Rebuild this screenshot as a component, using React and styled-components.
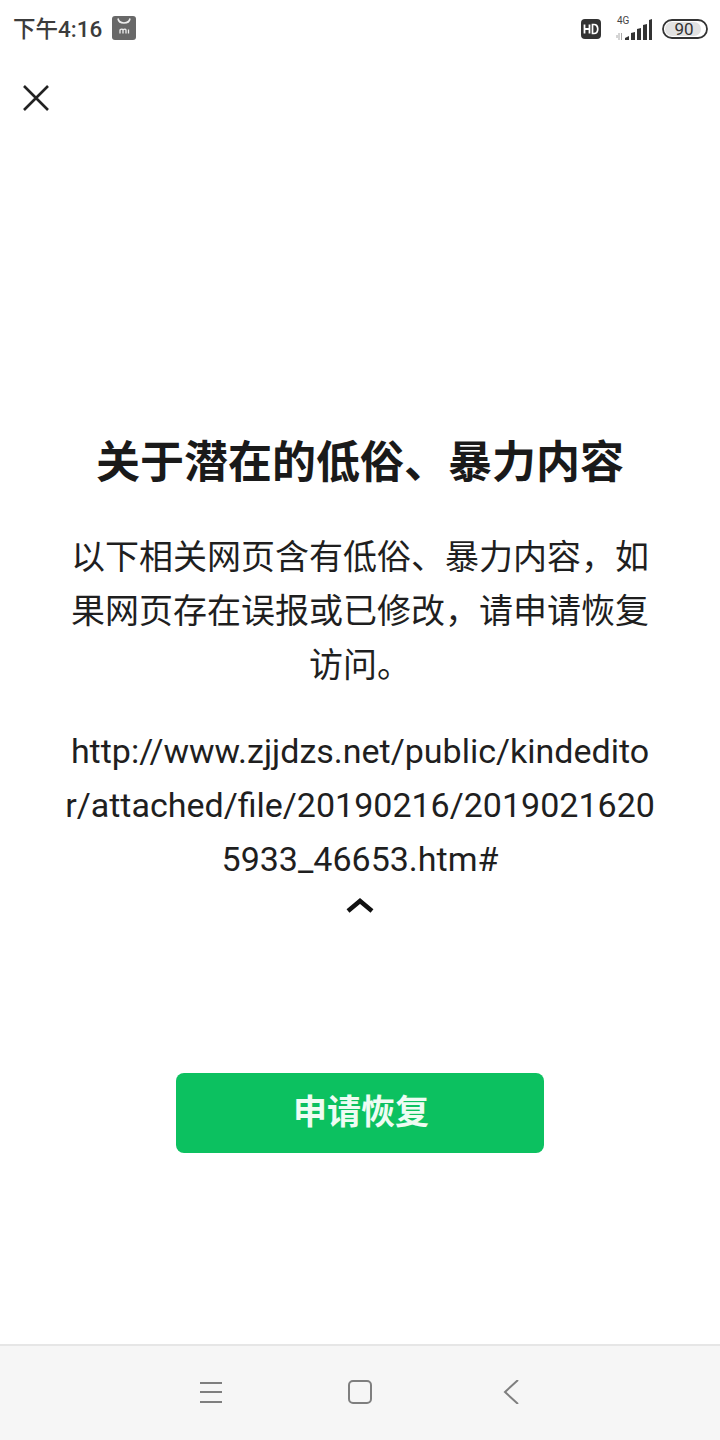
import React from "react";
import styled, { createGlobalStyle } from "styled-components";

const Global = createGlobalStyle`
  html, body { margin: 0; padding: 0; background: #fff; }
  body { font-family: Roboto, "Noto Sans CJK SC", sans-serif; }
`;

const Page = styled.div`
  width: 720px;
  height: 1440px;
  display: flex;
  flex-direction: column;
  overflow: hidden;
  background: #fff;
`;

const StatusBar = styled.div`
  height: 56px;
  flex: none;
  display: flex;
  align-items: center;
  justify-content: space-between;
  padding: 2px 12px 0 13px;
  box-sizing: border-box;
`;

const StatusGroup = styled.div`
  display: flex;
  align-items: center;
  gap: ${(p) => p.$gap || 0}px;
`;

const Clock = styled.span`
  font-size: 22.5px;
  line-height: 28px;
  font-weight: 500;
  color: #3c3c3c;
`;

const MiIcon = styled.svg`
  margin-top: -3px;
`;

const HdIcon = styled.svg`
  margin-right: 7px;
`;

const TopBar = styled.div`
  flex: none;
  height: 84px;
  padding: 29px 0 0 23px;
  box-sizing: border-box;
  display: flex;
  align-items: flex-start;
`;

const Main = styled.main`
  flex: 1;
  display: flex;
  flex-direction: column;
  align-items: center;
  padding-top: 297px;
  box-sizing: border-box;
`;

const Title = styled.h1`
  margin: 0;
  font-size: 44px;
  line-height: 52px;
  font-weight: 700;
  color: #1a1a1a;
  text-align: center;
  white-space: nowrap;
`;

const Paragraph = styled.p`
  margin: 41px 0 0;
  width: 590px;
  font-size: 34px;
  line-height: 54px;
  color: #1f1f1f;
  text-align: center;
`;

const Url = styled.p`
  margin: 32px 0 0;
  font-size: 34px;
  line-height: 54px;
  color: #1f1f1f;
  text-align: center;
  white-space: nowrap;
`;

const Chevron = styled.svg`
  display: block;
  margin-top: 12px;
`;

const Button = styled.button`
  margin-top: 159px;
  width: 368px;
  height: 80px;
  border: 0;
  border-radius: 8px;
  background: #0cc160;
  color: #eefcf3;
  font-family: inherit;
  font-size: 34px;
  font-weight: 700;
  padding: 0 0 7px 2px;
`;

const NavBar = styled.nav`
  flex: none;
  height: 96px;
  border-top: 2px solid #e6e6e6;
  background: #f6f6f6;
  box-sizing: border-box;
  display: grid;
  grid-template-columns: 24px 24px 24px;
  justify-content: center;
  column-gap: 125px;
  align-items: center;
  padding-bottom: 3px;
`;

const BackIcon = styled.svg`
  margin-left: 4px;
`;

const Line = { stroke: "#7f7f7f", fill: "none" };

export default function App() {
  return (
    <Page>
      <Global />
      <StatusBar>
        <StatusGroup $gap={9}>
          <Clock>下午4:16</Clock>
          <MiIcon width="26" height="26" viewBox="0 0 26 26">
            <rect x="1" y="1" width="24" height="24" rx="3" fill="#686868" />
            <path d="M7 3.500c1 6 11 6 12 0" fill="none" stroke="#eee" strokeWidth="1.6" />
            <path d="M9 18.500v-4M9 15c1-1.300 2.700-1.300 3 0v3.500M12 15c1-1.300 2.700-1.300 3 0v3.500M17.500 14.500v4" fill="none" stroke="#eee" strokeWidth="1.3" />
          </MiIcon>
        </StatusGroup>
        <StatusGroup $gap={7}>
          <HdIcon width="20" height="20" viewBox="0 0 20 20">
            <rect width="20" height="20" rx="4" fill="#333" />
            <path d="M3.500 5.500v9M3.500 10h5M8.500 5.500v9" stroke="#fff" strokeWidth="1.8" fill="none" />
            <path d="M11.500 5.500v9h1.500c5 0 5-9 0-9z" stroke="#fff" strokeWidth="1.7" fill="none" />
          </HdIcon>
          <svg width="40" height="26" viewBox="0 0 40 26">
            <text x="2" y="8" fontSize="10" fontFamily="Roboto, sans-serif" fill="#444">4G</text>
            <path d="M4 17v7M2 19v3M6.500 17v7" stroke="#aaa" strokeWidth="1" />
            <path d="M10 24v-2l4-2v4zM16 24v-7l4-1v8zM22 24v-11l4-1v12zM28 24v-15l4-1v16zM34 24v-20l3-1v21z" fill="#333" />
          </svg>
          <svg width="46" height="20" viewBox="0 0 46 20">
            <rect x="1" y="1" width="44" height="18" rx="9" fill="#fff" stroke="#333" strokeWidth="1.8" />
            <rect x="3" y="3" width="36" height="14" rx="7" fill="#e2e2e2" />
            <text x="22" y="16" textAnchor="middle" fontSize="17" fontFamily="Roboto, sans-serif" fill="#333">90</text>
          </svg>
        </StatusGroup>
      </StatusBar>
      <TopBar>
        <svg width="26" height="26" viewBox="0 0 26 26">
          <path d="M1 1l24 24M25 1L1 25" stroke="#222" strokeWidth="2.6" fill="none" />
        </svg>
      </TopBar>
      <Main>
        <Title>关于潜在的低俗、暴力内容</Title>
        <Paragraph>以下相关网页含有低俗、暴力内容，如果网页存在误报或已修改，请申请恢复访问。</Paragraph>
        <Url>
          http://www.zjjdzs.net/public/kindedito
          <br />
          r/attached/file/20190216/2019021620
          <br />
          5933_46653.htm#
        </Url>
        <Chevron width="28" height="16" viewBox="0 0 28 16">
          <path d="M2 13L14 3l12 10" stroke="#111" strokeWidth="4.5" fill="none" />
        </Chevron>
        <Button>申请恢复</Button>
      </Main>
      <NavBar>
        <svg width="24" height="24" viewBox="0 0 24 24">
          <path d="M1 3h22M1 12h22M1 22h22" {...Line} strokeWidth="2" />
        </svg>
        <svg width="24" height="24" viewBox="0 0 24 24">
          <rect x="1" y="1" width="22" height="22" rx="4" {...Line} strokeWidth="2" />
        </svg>
        <BackIcon width="24" height="24" viewBox="0 0 24 24">
          <path d="M17 0L4 12l13 12" {...Line} strokeWidth="2" />
        </BackIcon>
      </NavBar>
    </Page>
  );
}
